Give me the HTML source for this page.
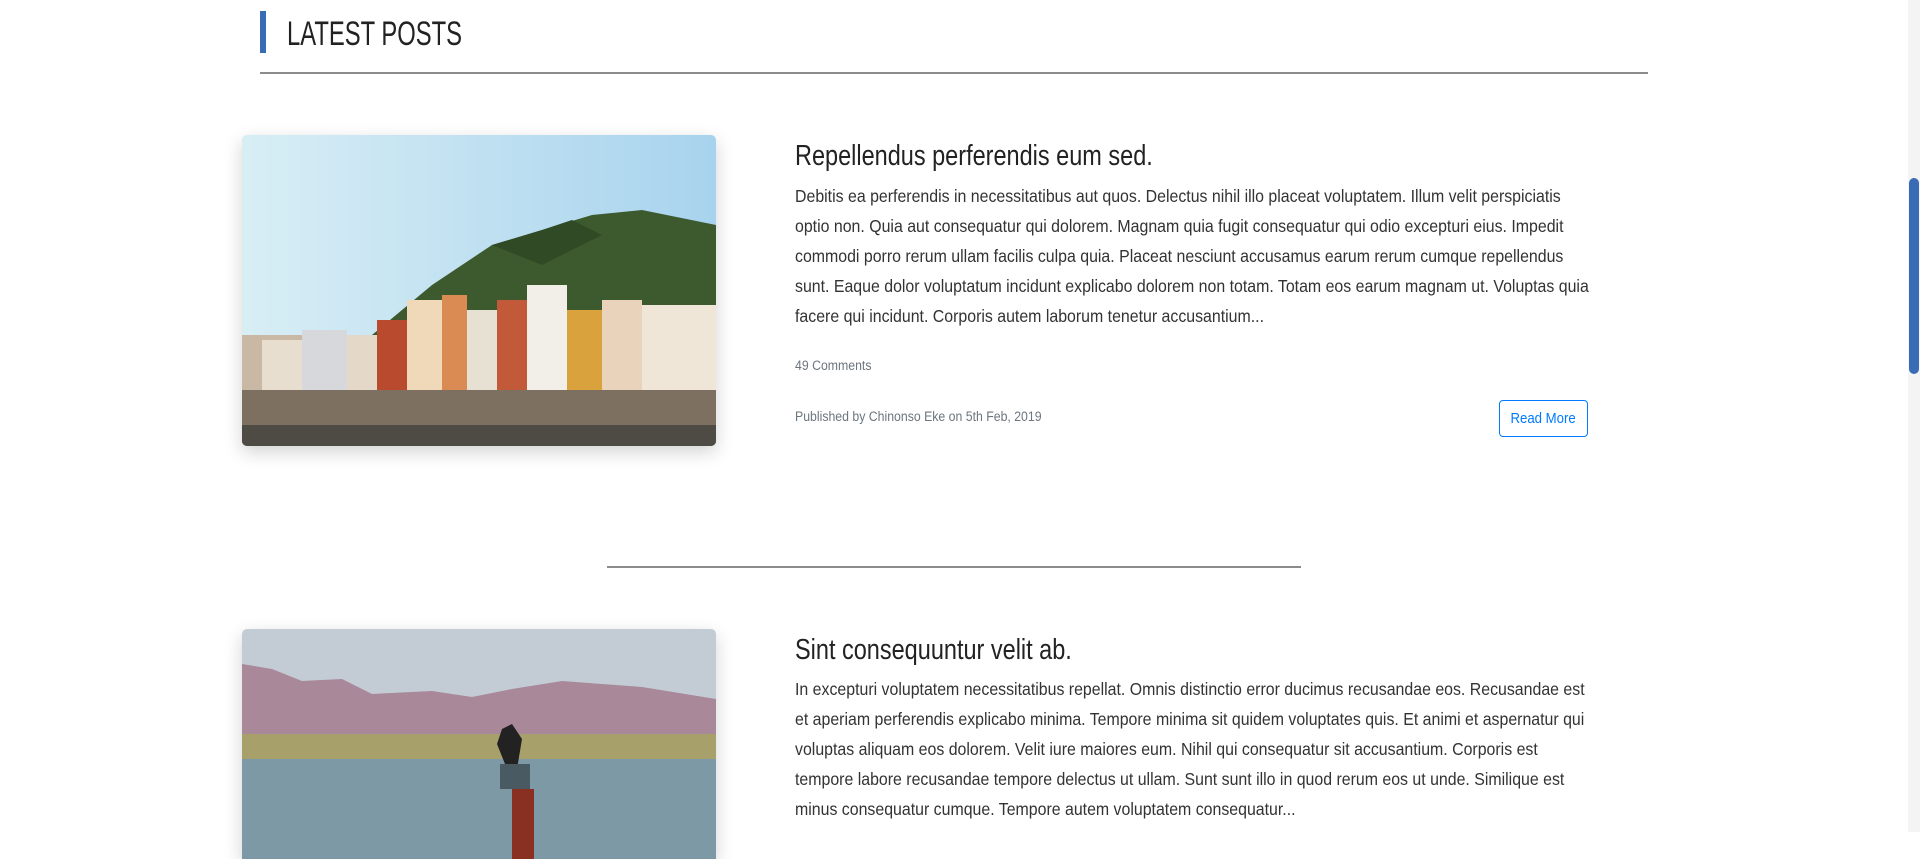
<!DOCTYPE html>
<html><head><meta charset="utf-8"><style>
body{margin:0;width:1920px;height:832px;overflow:hidden;background:#fff;font-family:"Liberation Sans Narrow","Liberation Sans",sans-serif;position:relative}
.a{position:absolute}
.bar{left:260px;top:11px;width:6px;height:42px;background:#3a6bb5}
h2{position:absolute;left:287px;top:15px;margin:0;font-weight:400;font-size:34px;color:#222;transform:scaleX(.70);transform-origin:left;white-space:nowrap}
.hr{left:260px;top:72px;width:1388px;height:2px;background:#8c8c8c}
.img{left:242px;width:474px;border-radius:5px;overflow:hidden;box-shadow:0 6px 18px rgba(0,0,0,.18)}
.t{left:795px;font-size:29px;color:#222;white-space:nowrap;transform:scaleX(.81);transform-origin:left}
.p{left:795px;font-size:17.5px;line-height:30px;color:#333;white-space:nowrap;transform:scaleX(.908);transform-origin:left}
.s{left:795px;font-size:13.5px;color:#6c757d;white-space:nowrap;transform:scaleX(.91);transform-origin:left}
.btn{left:1499px;top:400px;width:87px;height:35px;border:1px solid #007bff;border-radius:4px;color:#007bff;font-size:15px;text-align:center;line-height:35px}
.btn span{display:inline-block;transform:scaleX(.88)}
.sb{left:1908px;top:0;width:12px;height:832px;background:#f4f4f4}
.th{left:1909px;top:178px;width:10px;height:196px;background:#3a6bb5;border-radius:5px}
</style></head><body>
<div class="a bar"></div><h2>LATEST POSTS</h2><div class="a hr"></div>

<div class="a img" style="top:135px;height:311px">
<svg width="474" height="311" viewBox="0 0 474 311">
<defs><linearGradient id="sky" x1="0" x2="1"><stop offset="0" stop-color="#d8eef5"/><stop offset="1" stop-color="#a8d3ee"/></linearGradient></defs>
<rect width="474" height="311" fill="url(#sky)"/>
<path d="M130 200 L190 150 L250 110 L300 95 L350 80 L400 75 L474 90 L474 260 L130 260Z" fill="#3d5a2e"/>
<path d="M250 110 L300 95 L330 85 L360 100 L300 130Z" fill="#2f4a24"/>
<rect x="0" y="200" width="474" height="80" fill="#c9b8a3"/>
<rect x="20" y="205" width="40" height="60" fill="#e8ded0"/><rect x="60" y="195" width="45" height="70" fill="#d6d8dc"/>
<rect x="105" y="200" width="30" height="65" fill="#e4d9c9"/><rect x="135" y="185" width="30" height="80" fill="#b94a2e"/>
<rect x="165" y="165" width="35" height="100" fill="#f0d9b8"/><rect x="200" y="160" width="25" height="105" fill="#d98b53"/>
<rect x="225" y="175" width="30" height="90" fill="#e7e1d3"/><rect x="255" y="165" width="30" height="100" fill="#c25a3a"/>
<rect x="285" y="150" width="40" height="115" fill="#f2efe9"/><rect x="325" y="175" width="35" height="90" fill="#d9a23c"/>
<rect x="360" y="165" width="40" height="100" fill="#e9d3bb"/><rect x="400" y="170" width="74" height="95" fill="#efe6d8"/>
<rect x="0" y="255" width="474" height="56" fill="#7d7060"/>
<rect x="0" y="290" width="474" height="21" fill="#4e4a44"/>
</svg></div>
<div class="a t" style="top:140px">Repellendus perferendis eum sed.</div>
<div class="a p" style="top:181px">Debitis ea perferendis in necessitatibus aut quos. Delectus nihil illo placeat voluptatem. Illum velit perspiciatis<br>optio non. Quia aut consequatur qui dolorem. Magnam quia fugit consequatur qui odio excepturi eius. Impedit<br>commodi porro rerum ullam facilis culpa quia. Placeat nesciunt accusamus earum rerum cumque repellendus<br>sunt. Eaque dolor voluptatum incidunt explicabo dolorem non totam. Totam eos earum magnam ut. Voluptas quia<br>facere qui incidunt. Corporis autem laborum tenetur accusantium...</div>
<div class="a s" style="top:358px">49 Comments</div>
<div class="a s" style="top:409px">Published by Chinonso Eke on 5th Feb, 2019</div>
<div class="a btn"><span>Read More</span></div>

<div class="a" style="left:607px;top:566px;width:694px;height:2px;background:#8c8c8c"></div>

<div class="a img" style="top:629px;height:230px;border-radius:5px 5px 0 0">
<svg width="474" height="230" viewBox="0 0 474 230">
<rect width="474" height="230" fill="#c3ccd4"/>
<path d="M0 35 L30 40 L60 52 L100 50 L130 65 L190 62 L230 68 L270 60 L320 52 L360 55 L400 58 L474 70 L474 120 L0 120Z" fill="#a88899"/>
<rect x="0" y="105" width="474" height="30" fill="#a8a06a"/>
<rect x="0" y="130" width="474" height="100" fill="#7e99a6"/>
<path d="M260 100 L270 95 L280 110 L275 140 L265 140 L255 115Z" fill="#222"/>
<rect x="258" y="135" width="30" height="25" fill="#4a5a62"/>
<rect x="270" y="160" width="22" height="70" fill="#8a3022"/>
</svg></div>
<div class="a t" style="top:634px">Sint consequuntur velit ab.</div>
<div class="a p" style="top:674px">In excepturi voluptatem necessitatibus repellat. Omnis distinctio error ducimus recusandae eos. Recusandae est<br>et aperiam perferendis explicabo minima. Tempore minima sit quidem voluptates quis. Et animi et aspernatur qui<br>voluptas aliquam eos dolorem. Velit iure maiores eum. Nihil qui consequatur sit accusantium. Corporis est<br>tempore labore recusandae tempore delectus ut ullam. Sunt sunt illo in quod rerum eos ut unde. Similique est<br>minus consequatur cumque. Tempore autem voluptatem consequatur...</div>

<div class="a sb"></div><div class="a th"></div>
</body></html>
